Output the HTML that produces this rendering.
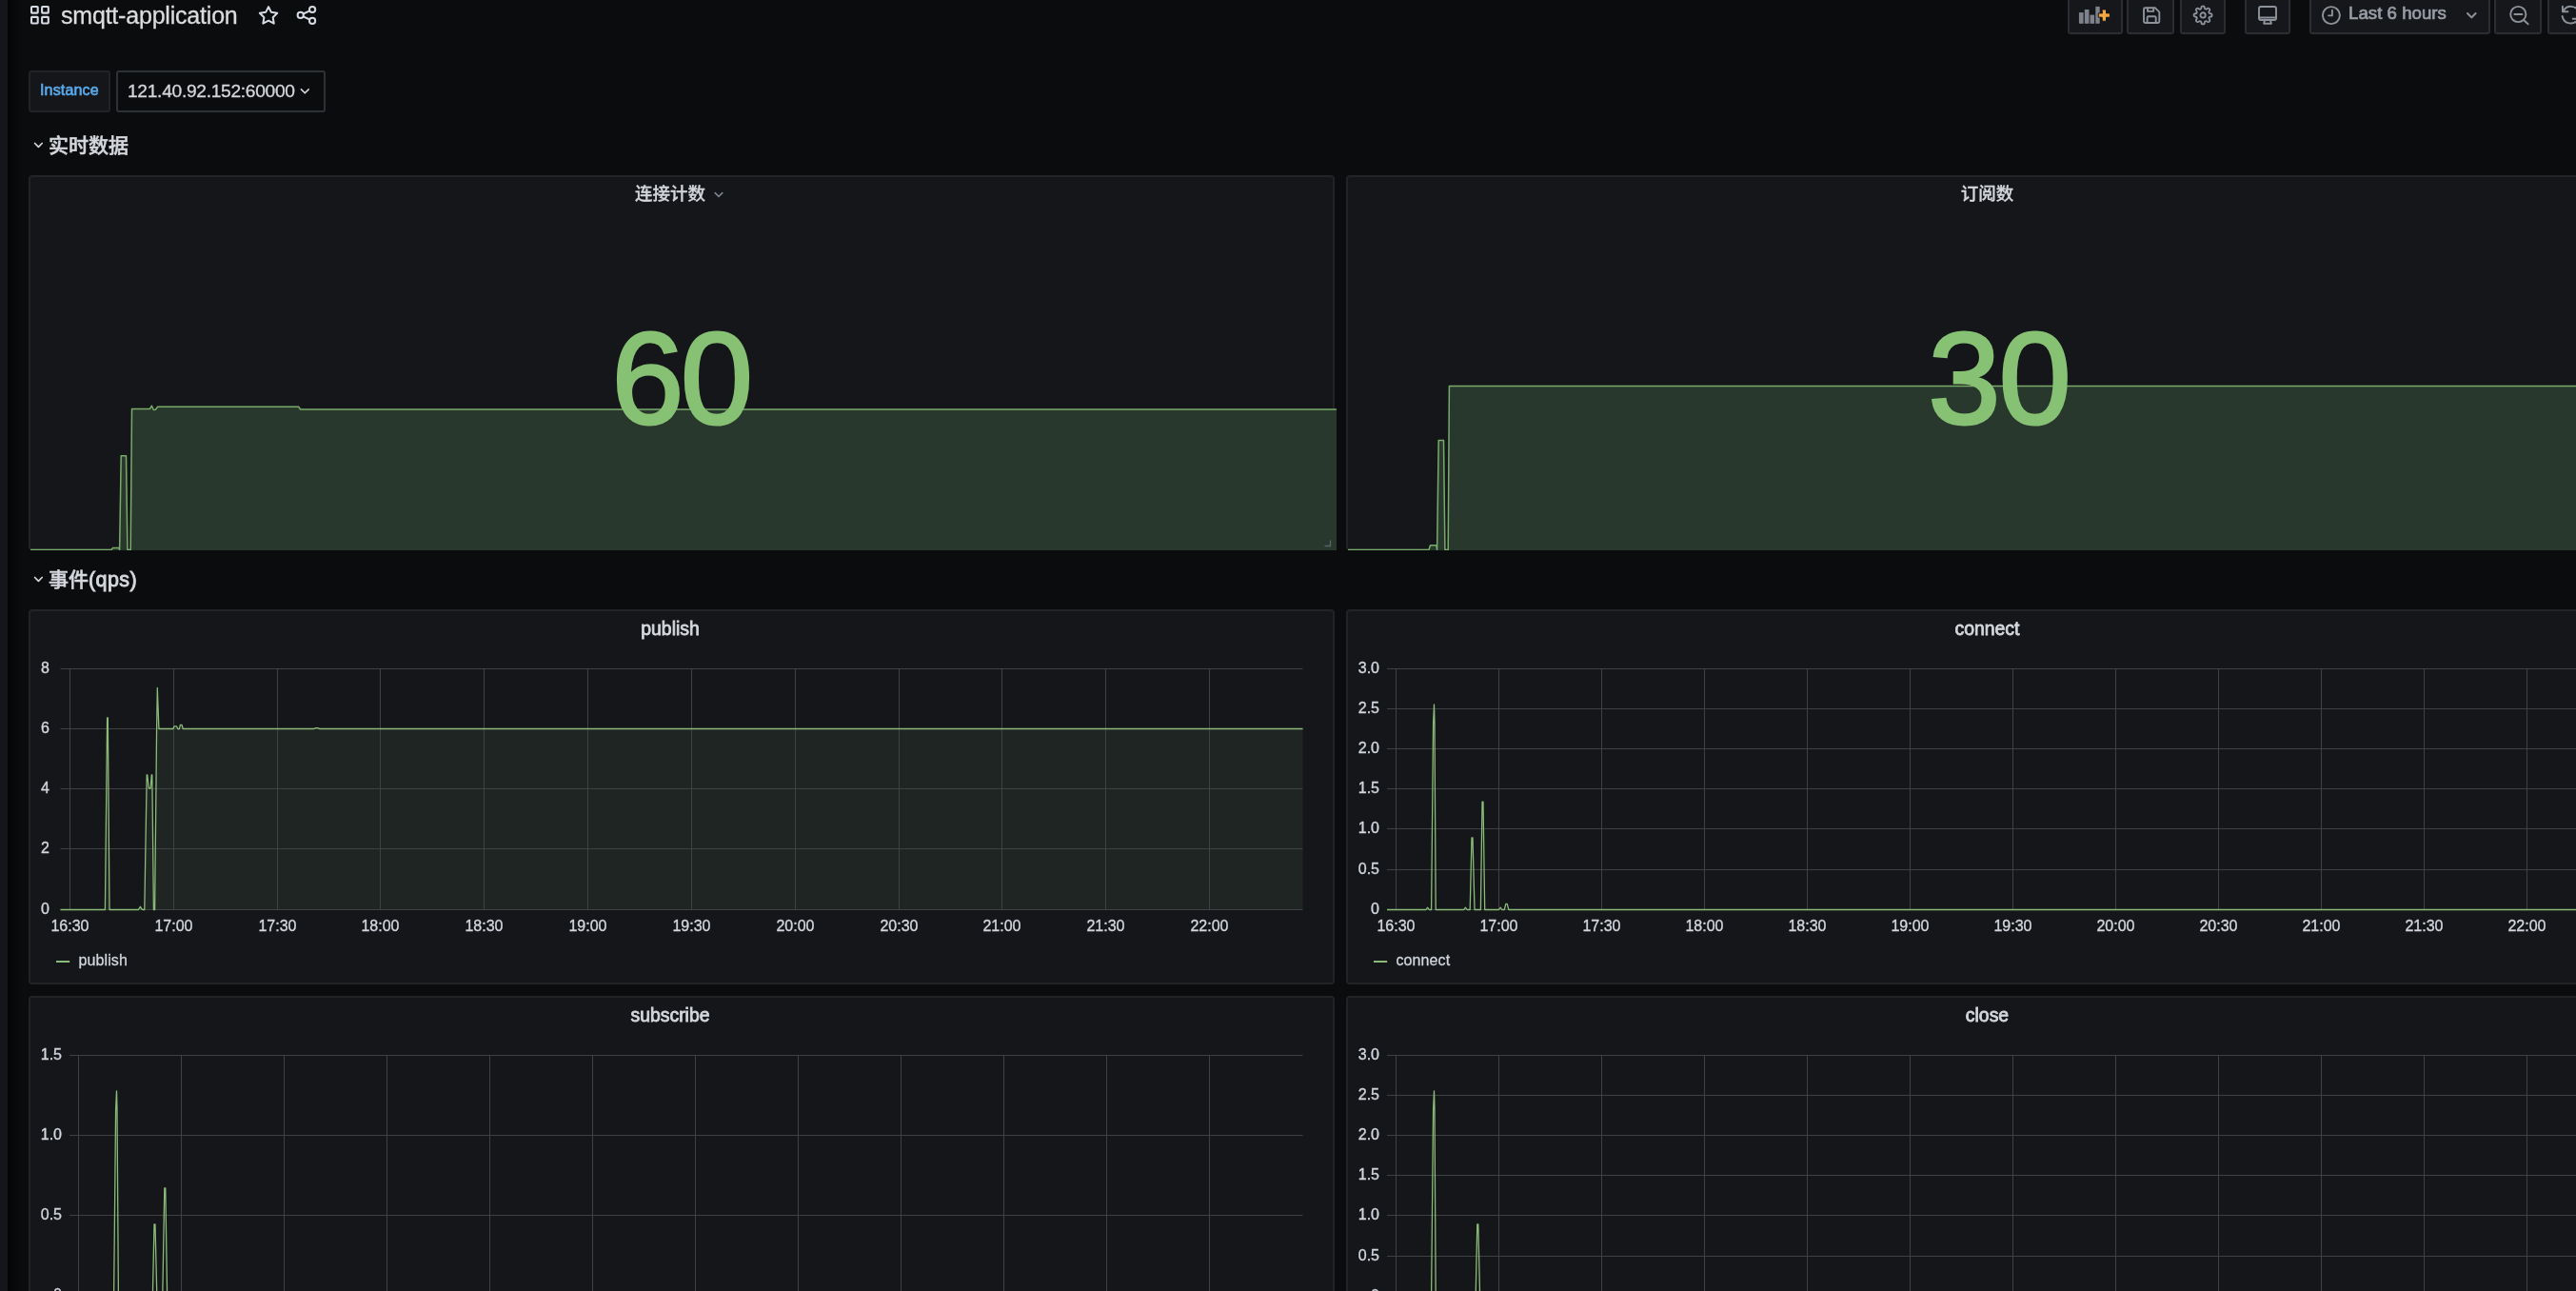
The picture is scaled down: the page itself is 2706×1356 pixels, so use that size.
<!DOCTYPE html>
<html lang="zh-CN"><head><meta charset="utf-8"><title>smqtt-application - Grafana</title>
<style>
*{box-sizing:border-box;margin:0;padding:0}
html,body{width:2706px;height:1356px;overflow:hidden;background:#0b0c0e;}
body{position:relative;font-family:"Liberation Sans", "Noto Sans CJK SC", sans-serif;color:#d4d7dc;-webkit-font-smoothing:antialiased}
#root{position:absolute;left:0;top:0;width:2706px;height:1356px;overflow:hidden;will-change:transform}
.abs{position:absolute;white-space:nowrap}
.panel{position:absolute;background:#141619;border:2px solid #212327;border-radius:4px;overflow:hidden}
.ptitle{position:absolute;font-size:19.4px;line-height:24px;font-weight:400;color:#d4d7dc;-webkit-text-stroke:0.8px #d4d7dc;letter-spacing:0;white-space:nowrap;transform:translateX(-50%)}
.btn{position:absolute;top:-7px;height:43px;background:#15171b;border:2px solid #2b2d32;border-radius:3px}
svg{position:absolute;overflow:visible}
svg text{font-family:"Liberation Sans", "Noto Sans CJK SC", sans-serif;}
.ax{font-size:16px;fill:#d2d6dd;stroke:#d2d6dd;stroke-width:0.35px}
.lg{font-size:16px;fill:#d2d6dd;stroke:#d2d6dd;stroke-width:0.3px;letter-spacing:0.1px}
</style></head>
<body>
<div id="root">
<div class="abs" style="left:0;top:0;width:8px;height:1356px;background:#141619"></div>
<div class="abs" style="left:8px;top:0;width:14px;height:1356px;background:linear-gradient(90deg,rgba(0,0,0,.55),rgba(0,0,0,0))"></div>
<svg style="left:0;top:0" width="400" height="40" viewBox="0 0 400 40" fill="none" stroke="#d6dbe3" stroke-width="2.1">
<rect x="33" y="7" width="6.7" height="6.6" rx="0.7"/><rect x="44.1" y="7" width="6.7" height="6.6" rx="0.7"/>
<rect x="33" y="17.900" width="6.7" height="6.6" rx="0.7"/><rect x="44.1" y="17.900" width="6.7" height="6.6" rx="0.7"/>
<path d="M282.05 7.10 L284.93 12.84 L291.28 13.80 L286.71 18.31 L287.75 24.65 L282.05 21.70 L276.35 24.65 L277.39 18.31 L272.82 13.80 L279.17 12.84Z" stroke-width="2" stroke-linejoin="round"/>
<g stroke-width="2"><circle cx="328.1" cy="10" r="3.1"/><circle cx="315.7" cy="15.900" r="3.1"/><circle cx="328.1" cy="21.900" r="3.1"/><path d="M318.5 14.500l6.900-3.200M318.5 17.300l6.900 3.200"/></g></svg>
<div class="abs" style="left:64px;top:0.5px;font-size:25px;line-height:30px;letter-spacing:-0.2px;color:#dcdcde;-webkit-text-stroke:0.3px #dcdcde">smqtt-application</div>
<div class="btn" style="left:2172px;width:58px"></div>
<div class="btn" style="left:2234px;width:50px"></div>
<div class="btn" style="left:2290px;width:48px"></div>
<div class="btn" style="left:2358px;width:48px"></div>
<div class="btn" style="left:2426px;width:190px"></div>
<div class="btn" style="left:2620px;width:50px"></div>
<div class="btn" style="left:2676px;width:54px"></div>
<svg style="left:2160px;top:0" width="546" height="40" viewBox="2160 0 546 40" fill="none" stroke="#8e939b" stroke-width="1.9" stroke-linecap="round" stroke-linejoin="round">
<g fill="#7e828a" stroke="none"><rect x="2183.900" y="13.1" width="4.7" height="11.7"/><rect x="2189.800" y="10" width="4.7" height="14.8"/><rect x="2195.500" y="15.6" width="4.6" height="9.2"/><rect x="2201.300" y="6.900" width="4.4" height="17.900"/></g>
<path d="M2208.200 10h4.300v3.900h3.900v4.300h-3.900v4h-4.300v-4h-3.900v-4.300h3.900z" fill="#f3a93f" stroke="#15171b" stroke-width="1" stroke-linejoin="miter"/>
<path d="M2252 9.700a1.500 1.500 0 011.500-1.500h10.300l4.500 4.500v9.800a1.500 1.500 0 01-1.500 1.500h-13.300a1.500 1.500 0 01-1.500-1.500z"/><path d="M2255.600 23.800v-5.200a1.300 1.300 0 011.300-1.300h6.500a1.300 1.300 0 011.300 1.300v5.200M2256 8.400v3.500h6.200v-3.500"/>
<g transform="translate(2303.700 5.550) scale(0.865)"><circle cx="12" cy="12" r="3.100" stroke-width="2.100"/><path d="M19.4 15a1.65 1.65 0 00.33 1.82l.06.06a2 2 0 11-2.83 2.83l-.06-.06a1.65 1.65 0 00-1.82-.33 1.65 1.65 0 00-1 1.51V21a2 2 0 11-4 0v-.09A1.65 1.65 0 009 19.4a1.65 1.65 0 00-1.82.33l-.06.06a2 2 0 11-2.83-2.83l.06-.06a1.65 1.65 0 00.33-1.82 1.65 1.65 0 00-1.51-1H3a2 2 0 110-4h.09A1.65 1.65 0 004.6 9a1.65 1.65 0 00-.33-1.82l-.06-.06a2 2 0 112.83-2.83l.06.06a1.65 1.65 0 001.82.33H9a1.65 1.65 0 001-1.51V3a2 2 0 114 0v.09a1.65 1.65 0 001 1.51 1.65 1.65 0 001.82-.33l.06-.06a2 2 0 112.83 2.83l-.06.06a1.65 1.65 0 00-.33 1.82V9a1.65 1.65 0 001.51 1H21a2 2 0 110 4h-.09a1.65 1.65 0 00-1.51 1z" stroke-width="2.100"/></g>
<rect x="2373" y="7" width="18" height="14" rx="2"/><path d="M2373 18.500h18M2379 21.300l-.9 3.400h7.800l-.9-3.400"/>
<circle cx="2448.900" cy="16.100" r="9"/><path d="M2449.900 10.800v5.600h-3.800"/>
<path d="M2592 14l4.300 4.400 4.300-4.400" stroke-width="2"/>
<circle cx="2645.300" cy="15" r="8.100"/><path d="M2641.400 15h8M2651.300 21.200l4.300 4.100"/>
<path d="M2691.900 6.700V12.200H2697.500M2692.700 11.600A9 9 0 012709.200 13M2691.600 17A9 9 0 002708.500 19.600M2702.700 19.800H2708.300V25.400"/>
</svg>
<div class="abs" style="left:2467px;top:2px;font-size:18.6px;line-height:24px;color:#989ca4;-webkit-text-stroke:0.7px #989ca4;letter-spacing:0.05px">Last 6 hours</div>
<div class="abs" style="left:30px;top:74px;width:86px;height:44px;background:#141619;border:2px solid #212327;border-radius:3px"></div>
<div class="abs" style="left:42px;top:85px;font-size:16px;line-height:20px;color:#58a9ea;-webkit-text-stroke:0.65px #58a9ea;letter-spacing:0.15px">Instance</div>
<div class="abs" style="left:122px;top:74px;width:220px;height:44px;background:#0b0c0e;border:2px solid #2d3237;border-radius:3px"></div>
<div class="abs" style="left:134px;top:84px;font-size:19.2px;line-height:24px;letter-spacing:-0.3px;-webkit-text-stroke:0.3px #d4d7dc;color:#d4d7dc">121.40.92.152:60000</div>
<svg style="left:315px;top:92px" width="11" height="8" viewBox="0 0 11 8" fill="none" stroke="#d4d7dc" stroke-width="1.6" stroke-linecap="round" stroke-linejoin="round"><path d="M1.4 1.9l3.9 3.9 3.9-3.9"/></svg>
<svg style="left:34.6px;top:148.5px" width="11" height="8" viewBox="0 0 11 8" fill="none" stroke="#d4d7dc" stroke-width="1.7" stroke-linecap="round" stroke-linejoin="round"><path d="M1.6 1.5l3.8 3.8 3.8-3.8"/></svg>
<div class="abs" style="left:51px;top:138px;font-size:21px;line-height:30px;font-weight:500;color:#d4d7dc;-webkit-text-stroke:0.5px #d4d7dc">实时数据</div>
<svg style="left:34.6px;top:604.5px" width="11" height="8" viewBox="0 0 11 8" fill="none" stroke="#d4d7dc" stroke-width="1.7" stroke-linecap="round" stroke-linejoin="round"><path d="M1.6 1.5l3.8 3.8 3.8-3.8"/></svg>
<div class="abs" style="left:51px;top:594px;font-size:21px;line-height:30px;font-weight:500;color:#d4d7dc;-webkit-text-stroke:0.5px #d4d7dc">事件<span style="font-size:21.5px;letter-spacing:0.4px;-webkit-text-stroke:0.9px #d4d7dc">(qps)</span></div>
<div class="panel" style="left:30px;top:184px;width:1372px;height:394px;overflow:visible">
<div style="position:absolute;left:-2px;top:-2px;width:1374px;height:394px;overflow:hidden"><svg style="left:0;top:0" width="1372" height="394" viewBox="0 0 1372 394">
<polygon points="2.00,393.50 87.00,393.50 88.50,391.40 94.80,391.40 95.60,393.50 97.20,294.80 102.50,294.80 103.90,393.50 107.20,393.50 108.50,245.40 127.50,245.40 129.40,242.20 131.30,246.40 133.40,246.20 135.60,243.30 283.70,243.30 285.60,246.00 1374.00,246.00 1374.00,394 2.00,394" fill="#29382c"/>
<polyline points="2.00,393.50 87.00,393.50 88.50,391.40 94.80,391.40 95.60,393.50 97.20,294.80 102.50,294.80 103.90,393.50 107.20,393.50 108.50,245.40 127.50,245.40 129.40,242.20 131.30,246.40 133.40,246.20 135.60,243.30 283.70,243.30 285.60,246.00 1374.00,246.00" fill="none" stroke="#78ab6a" stroke-width="1.5" stroke-linejoin="round"/></svg></div>
<div class="ptitle" style="left:672px;top:6px;font-size:18.5px;font-weight:500;-webkit-text-stroke:0.3px #d4d7dc">连接计数</div>
<svg style="left:718px;top:14.699999999999989px" width="10" height="8" viewBox="0 0 10 8" fill="none" stroke="#7b818b" stroke-width="1.6" stroke-linecap="round" stroke-linejoin="round"><path d="M1.2 1.6l3.8 3.8 3.8-3.8"/></svg>
<div class="abs" style="left:610.5px;top:137px;font-size:136.5px;line-height:150px;color:#86c174;-webkit-text-stroke:3px #86c174;letter-spacing:-3.5px">60</div>
</div>
<div class="panel" style="left:1414px;top:184px;width:1372px;height:394px;overflow:visible">
<div style="position:absolute;left:-2px;top:-2px;width:1374px;height:394px;overflow:hidden"><svg style="left:0;top:0" width="1372" height="394" viewBox="0 0 1372 394">
<polygon points="2.00,393.50 87.00,393.50 88.50,388.80 94.80,388.80 95.60,393.50 97.20,278.50 102.50,278.50 103.90,393.50 107.20,393.50 108.40,221.60 1376.00,221.60 1376.00,394 2.00,394" fill="#29382c"/>
<polyline points="2.00,393.50 87.00,393.50 88.50,388.80 94.80,388.80 95.60,393.50 97.20,278.50 102.50,278.50 103.90,393.50 107.20,393.50 108.40,221.60 1376.00,221.60" fill="none" stroke="#78ab6a" stroke-width="1.5" stroke-linejoin="round"/></svg></div>
<div class="ptitle" style="left:671.5999999999999px;top:6px;font-size:18.5px;font-weight:500;-webkit-text-stroke:0.3px #d4d7dc">订阅数</div>
<div class="abs" style="left:609.4000000000001px;top:137px;font-size:136.5px;line-height:150px;color:#86c174;-webkit-text-stroke:3px #86c174;letter-spacing:-1.5px">30</div>
</div>
<svg style="left:1391px;top:567px" width="8" height="8" viewBox="0 0 8 8" fill="none" stroke="#5c6068" stroke-width="1.4"><path d="M6.5 0.500v6h-6"/></svg>
<div class="panel" style="left:30px;top:640px;width:1372px;height:394px">
<div class="ptitle" style="left:672px;top:6px">publish</div>
<svg style="left:-32px;top:-642px" width="2800" height="1500" viewBox="0 0 2800 1500">
<polygon points="63.50,955.50 110.40,955.50 112.60,753.80 113.30,753.80 115.00,955.50 145.50,955.50 146.60,953.50 147.50,952.30 148.60,954.60 150.00,955.50 151.80,955.50 154.20,814.00 154.80,814.00 156.30,828.00 158.20,828.00 159.20,814.00 159.80,814.00 161.40,955.50 162.60,955.50 164.60,765.00 165.30,722.50 166.90,765.50 182.00,765.50 183.00,762.80 185.40,762.80 187.00,765.80 188.40,765.50 189.40,761.30 191.00,761.30 192.20,765.50 330.00,765.50 331.50,764.60 334.00,764.60 335.50,765.50 1368.50,765.50 1368.50,955.5 63.50,955.5" fill="rgb(130,170,115)" fill-opacity="0.105"/>
<g stroke="#3f4145" stroke-width="1.05" fill="none">
<path d="M63.5 702.5H1368.5"/>
<path d="M63.5 765.5H1368.5"/>
<path d="M63.5 828.5H1368.5"/>
<path d="M63.5 891.5H1368.5"/>
<path d="M63.5 955.5H1368.5"/>
<path d="M73.5 702.5V955.5"/>
<path d="M182.5 702.5V955.5"/>
<path d="M291.5 702.5V955.5"/>
<path d="M399.5 702.5V955.5"/>
<path d="M508.5 702.5V955.5"/>
<path d="M617.5 702.5V955.5"/>
<path d="M726.5 702.5V955.5"/>
<path d="M835.5 702.5V955.5"/>
<path d="M944.5 702.5V955.5"/>
<path d="M1052.5 702.5V955.5"/>
<path d="M1161.5 702.5V955.5"/>
<path d="M1270.5 702.5V955.5"/>
</g>
<text class="ax" x="52" y="706.5" text-anchor="end">8</text>
<text class="ax" x="52" y="769.5" text-anchor="end">6</text>
<text class="ax" x="52" y="832.5" text-anchor="end">4</text>
<text class="ax" x="52" y="895.5" text-anchor="end">2</text>
<text class="ax" x="52" y="960.1" text-anchor="end">0</text>
<text class="ax" x="73.5" y="977.7" text-anchor="middle">16:30</text>
<text class="ax" x="182.5" y="977.7" text-anchor="middle">17:00</text>
<text class="ax" x="291.5" y="977.7" text-anchor="middle">17:30</text>
<text class="ax" x="399.5" y="977.7" text-anchor="middle">18:00</text>
<text class="ax" x="508.5" y="977.7" text-anchor="middle">18:30</text>
<text class="ax" x="617.5" y="977.7" text-anchor="middle">19:00</text>
<text class="ax" x="726.5" y="977.7" text-anchor="middle">19:30</text>
<text class="ax" x="835.5" y="977.7" text-anchor="middle">20:00</text>
<text class="ax" x="944.5" y="977.7" text-anchor="middle">20:30</text>
<text class="ax" x="1052.5" y="977.7" text-anchor="middle">21:00</text>
<text class="ax" x="1161.5" y="977.7" text-anchor="middle">21:30</text>
<text class="ax" x="1270.5" y="977.7" text-anchor="middle">22:00</text>
<polyline points="63.50,955.50 110.40,955.50 112.60,753.80 113.30,753.80 115.00,955.50 145.50,955.50 146.60,953.50 147.50,952.30 148.60,954.60 150.00,955.50 151.80,955.50 154.20,814.00 154.80,814.00 156.30,828.00 158.20,828.00 159.20,814.00 159.80,814.00 161.40,955.50 162.60,955.50 164.60,765.00 165.30,722.50 166.90,765.50 182.00,765.50 183.00,762.80 185.40,762.80 187.00,765.80 188.40,765.50 189.40,761.30 191.00,761.30 192.20,765.50 330.00,765.50 331.50,764.60 334.00,764.60 335.50,765.50 1368.50,765.50" fill="none" stroke="#8bbb78" stroke-width="1.3" stroke-linejoin="round"/>
<path d="M59 1010h14.2" stroke="#8bbb78" stroke-width="2"/>
<text class="lg" x="82.5" y="1014.3">publish</text>
</svg>
</div>
<div class="panel" style="left:1414px;top:640px;width:1372px;height:394px">
<div class="ptitle" style="left:671.5px;top:6px">connect</div>
<svg style="left:-1416px;top:-642px" width="2800" height="1500" viewBox="0 0 2800 1500">
<g stroke="#3f4145" stroke-width="1.05" fill="none">
<path d="M1457 702.5H2752.5"/>
<path d="M1457 744.5H2752.5"/>
<path d="M1457 786.5H2752.5"/>
<path d="M1457 828.5H2752.5"/>
<path d="M1457 870.5H2752.5"/>
<path d="M1457 913.5H2752.5"/>
<path d="M1457 955.5H2752.5"/>
<path d="M1466.5 702.5V955.5"/>
<path d="M1574.5 702.5V955.5"/>
<path d="M1682.5 702.5V955.5"/>
<path d="M1790.5 702.5V955.5"/>
<path d="M1898.5 702.5V955.5"/>
<path d="M2006.5 702.5V955.5"/>
<path d="M2114.5 702.5V955.5"/>
<path d="M2222.5 702.5V955.5"/>
<path d="M2330.5 702.5V955.5"/>
<path d="M2438.5 702.5V955.5"/>
<path d="M2546.5 702.5V955.5"/>
<path d="M2654.5 702.5V955.5"/>
</g>
<text class="ax" x="1449" y="706.5" text-anchor="end">3.0</text>
<text class="ax" x="1449" y="748.5" text-anchor="end">2.5</text>
<text class="ax" x="1449" y="790.5" text-anchor="end">2.0</text>
<text class="ax" x="1449" y="832.5" text-anchor="end">1.5</text>
<text class="ax" x="1449" y="874.5" text-anchor="end">1.0</text>
<text class="ax" x="1449" y="917.5" text-anchor="end">0.5</text>
<text class="ax" x="1449" y="960.1" text-anchor="end">0</text>
<text class="ax" x="1466.5" y="977.7" text-anchor="middle">16:30</text>
<text class="ax" x="1574.5" y="977.7" text-anchor="middle">17:00</text>
<text class="ax" x="1682.5" y="977.7" text-anchor="middle">17:30</text>
<text class="ax" x="1790.5" y="977.7" text-anchor="middle">18:00</text>
<text class="ax" x="1898.5" y="977.7" text-anchor="middle">18:30</text>
<text class="ax" x="2006.5" y="977.7" text-anchor="middle">19:00</text>
<text class="ax" x="2114.5" y="977.7" text-anchor="middle">19:30</text>
<text class="ax" x="2222.5" y="977.7" text-anchor="middle">20:00</text>
<text class="ax" x="2330.5" y="977.7" text-anchor="middle">20:30</text>
<text class="ax" x="2438.5" y="977.7" text-anchor="middle">21:00</text>
<text class="ax" x="2546.5" y="977.7" text-anchor="middle">21:30</text>
<text class="ax" x="2654.5" y="977.7" text-anchor="middle">22:00</text>
<polyline points="1457.00,955.50 1498.00,955.50 1499.60,953.20 1501.20,955.50 1503.60,955.50 1505.60,760.00 1506.50,740.00 1507.00,760.00 1508.20,955.50 1537.80,955.50 1539.40,953.20 1541.00,955.50 1544.20,955.50 1546.00,880.00 1547.00,880.00 1549.00,955.50 1555.40,955.50 1557.00,842.20 1558.00,842.20 1559.70,955.50 1574.60,955.50 1576.20,953.20 1577.80,955.50 1580.30,955.50 1581.80,949.40 1583.20,949.40 1584.80,955.50 2790.00,955.50" fill="none" stroke="#8bbb78" stroke-width="1.3" stroke-linejoin="round"/>
<path d="M1443 1010h14.2" stroke="#8bbb78" stroke-width="2"/>
<text class="lg" x="1466.5" y="1014.3">connect</text>
</svg>
</div>
<div class="panel" style="left:30px;top:1046px;width:1372px;height:394px">
<div class="ptitle" style="left:672px;top:6px">subscribe</div>
<svg style="left:-32px;top:-1048px" width="2800" height="1500" viewBox="0 0 2800 1500">
<g stroke="#3f4145" stroke-width="1.05" fill="none">
<path d="M73 1108.5H1368.5"/>
<path d="M73 1192.5H1368.5"/>
<path d="M73 1276.5H1368.5"/>
<path d="M73 1360.5H1368.5"/>
<path d="M82.5 1108.5V1360.5"/>
<path d="M190.5 1108.5V1360.5"/>
<path d="M298.5 1108.5V1360.5"/>
<path d="M406.5 1108.5V1360.5"/>
<path d="M514.5 1108.5V1360.5"/>
<path d="M622.5 1108.5V1360.5"/>
<path d="M730.5 1108.5V1360.5"/>
<path d="M838.5 1108.5V1360.5"/>
<path d="M946.5 1108.5V1360.5"/>
<path d="M1054.5 1108.5V1360.5"/>
<path d="M1162.5 1108.5V1360.5"/>
<path d="M1270.5 1108.5V1360.5"/>
</g>
<text class="ax" x="65" y="1112.5" text-anchor="end">1.5</text>
<text class="ax" x="65" y="1196.5" text-anchor="end">1.0</text>
<text class="ax" x="65" y="1280.5" text-anchor="end">0.5</text>
<text class="ax" x="65" y="1365.1" text-anchor="end">0</text>
<polyline points="73.00,1360.50 119.60,1360.50 121.60,1165.00 122.50,1145.80 123.00,1165.00 124.40,1360.50 160.40,1360.50 162.00,1286.00 163.00,1286.00 164.80,1360.50 170.80,1360.50 172.80,1247.80 173.80,1247.80 175.60,1360.50 1368.50,1360.50" fill="none" stroke="#8bbb78" stroke-width="1.3" stroke-linejoin="round"/>
</svg>
</div>
<div class="panel" style="left:1414px;top:1046px;width:1372px;height:394px">
<div class="ptitle" style="left:671.5px;top:6px">close</div>
<svg style="left:-1416px;top:-1048px" width="2800" height="1500" viewBox="0 0 2800 1500">
<g stroke="#3f4145" stroke-width="1.05" fill="none">
<path d="M1457 1108.5H2752.5"/>
<path d="M1457 1150.5H2752.5"/>
<path d="M1457 1192.5H2752.5"/>
<path d="M1457 1234.5H2752.5"/>
<path d="M1457 1276.5H2752.5"/>
<path d="M1457 1319.5H2752.5"/>
<path d="M1457 1361.5H2752.5"/>
<path d="M1466.5 1108.5V1361.5"/>
<path d="M1574.5 1108.5V1361.5"/>
<path d="M1682.5 1108.5V1361.5"/>
<path d="M1790.5 1108.5V1361.5"/>
<path d="M1898.5 1108.5V1361.5"/>
<path d="M2006.5 1108.5V1361.5"/>
<path d="M2114.5 1108.5V1361.5"/>
<path d="M2222.5 1108.5V1361.5"/>
<path d="M2330.5 1108.5V1361.5"/>
<path d="M2438.5 1108.5V1361.5"/>
<path d="M2546.5 1108.5V1361.5"/>
<path d="M2654.5 1108.5V1361.5"/>
</g>
<text class="ax" x="1449" y="1112.5" text-anchor="end">3.0</text>
<text class="ax" x="1449" y="1154.5" text-anchor="end">2.5</text>
<text class="ax" x="1449" y="1196.5" text-anchor="end">2.0</text>
<text class="ax" x="1449" y="1238.5" text-anchor="end">1.5</text>
<text class="ax" x="1449" y="1280.5" text-anchor="end">1.0</text>
<text class="ax" x="1449" y="1323.5" text-anchor="end">0.5</text>
<text class="ax" x="1449" y="1366.1" text-anchor="end">0</text>
<polyline points="1457.00,1360.50 1503.60,1360.50 1505.60,1165.00 1506.50,1145.80 1507.00,1165.00 1508.20,1360.50 1550.20,1360.50 1551.80,1285.80 1552.80,1285.80 1554.60,1360.50 2790.00,1360.50" fill="none" stroke="#8bbb78" stroke-width="1.3" stroke-linejoin="round"/>
</svg>
</div>
</div>
</body></html>
